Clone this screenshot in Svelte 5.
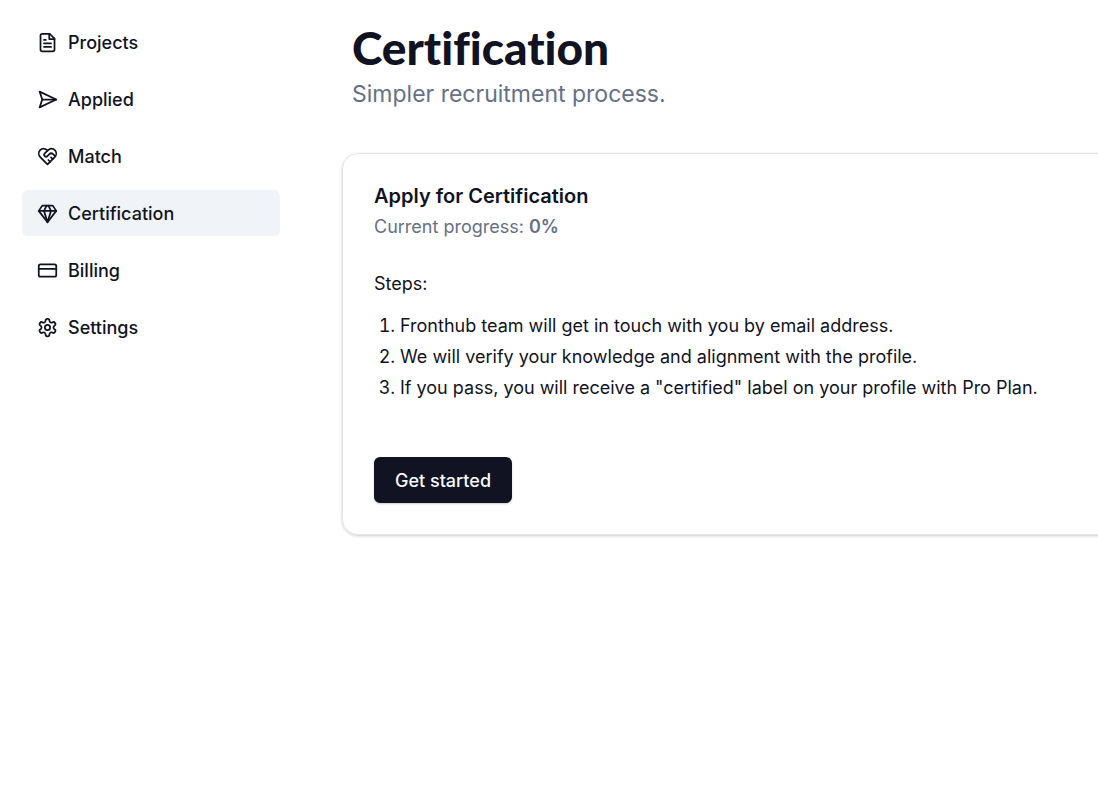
<script>
  const items = [
    { id: 'projects', label: 'Projects' },
    { id: 'applied', label: 'Applied' },
    { id: 'match', label: 'Match' },
    { id: 'certification', label: 'Certification' },
    { id: 'billing', label: 'Billing' },
    { id: 'settings', label: 'Settings' },
  ];

  let active = 'certification';
  let progress = 0;

  function start() {
    progress = progress === 0 ? 10 : progress;
  }
</script>

<div class="layout">
  <nav class="sidebar">
    {#each items as item}
      <a
        href="#{item.id}"
        class="nav-link"
        class:active={active === item.id}
        on:click|preventDefault={() => (active = item.id)}
      >
        <svg class="icon" viewBox="0 0 24 24" aria-hidden="true">
          {#if item.id === 'projects'}
            <path d="M14.5 2H6a2 2 0 0 0-2 2v16a2 2 0 0 0 2 2h12a2 2 0 0 0 2-2V7.5L14.5 2z" />
            <path d="M14 2v6h6M16 13H8M16 17H8M10 9H8" />
          {:else if item.id === 'applied'}
            <path d="m3 3 3 9-3 9 19-9Z" />
            <path d="M6 12h16" />
          {:else if item.id === 'match'}
            <path d="M20.42 4.58a5.4 5.4 0 0 0-7.65 0l-.77.78-.77-.78a5.4 5.4 0 0 0-7.65 0C1.46 6.7 1.33 10.28 4 13l8 8 8-8c2.67-2.72 2.54-6.3.42-8.42z" />
            <path d="M12 5.36 8.87 8.5a2.13 2.13 0 0 0 0 3h0a2.13 2.13 0 0 0 3 0l2.26-2.21a3 3 0 0 1 4.22 0l2.4 2.4" />
            <path d="m18 15-2-2M15 18l-2-2" />
          {:else if item.id === 'certification'}
            <path d="M6 3h12l4 6-10 13L2 9Z" />
            <path d="M11 3 8 9l4 13 4-13-3-6M2 9h20" />
          {:else if item.id === 'billing'}
            <rect width="20" height="14" x="2" y="5" rx="2" />
            <path d="M2 10h20" />
          {:else}
            <path d="M12.22 2h-.44a2 2 0 0 0-2 2v.18a2 2 0 0 1-1 1.73l-.43.25a2 2 0 0 1-2 0l-.15-.08a2 2 0 0 0-2.73.73l-.22.38a2 2 0 0 0 .73 2.73l.15.1a2 2 0 0 1 1 1.72v.51a2 2 0 0 1-1 1.74l-.15.09a2 2 0 0 0-.73 2.73l.22.38a2 2 0 0 0 2.73.73l.15-.08a2 2 0 0 1 2 0l.43.25a2 2 0 0 1 1 1.73V20a2 2 0 0 0 2 2h.44a2 2 0 0 0 2-2v-.18a2 2 0 0 1 1-1.73l.43-.25a2 2 0 0 1 2 0l.15.08a2 2 0 0 0 2.73-.73l.22-.39a2 2 0 0 0-.73-2.73l-.15-.08a2 2 0 0 1-1-1.74v-.5a2 2 0 0 1 1-1.74l.15-.09a2 2 0 0 0 .73-2.73l-.22-.38a2 2 0 0 0-2.73-.73l-.15.08a2 2 0 0 1-2 0l-.43-.25a2 2 0 0 1-1-1.73V4a2 2 0 0 0-2-2z" />
            <circle cx="12" cy="12" r="3" />
          {/if}
        </svg>
        {item.label}
      </a>
    {/each}
  </nav>

  <main class="content">
    <header class="page-header">
      <h1>Certification</h1>
      <p>Simpler recruitment process.</p>
    </header>

    <section class="card">
      <h2>Apply for Certification</h2>
      <p class="progress">Current progress: <strong>{progress}%</strong></p>

      <p class="steps-title">Steps:</p>
      <ol>
        <li>Fronthub team will get in touch with you by email address.</li>
        <li>We will verify your knowledge and alignment with the profile.</li>
        <li>If you pass, you will receive a "certified" label on your profile with Pro Plan.</li>
      </ol>

      <button type="button" on:click={start}>Get started</button>
    </section>
  </main>
</div>

<style>
  :global(body) {
    background: #fff;
    color: #111322;
    font-family: Inter, sans-serif;
    font-size: 18px;
  }

  h1,
  h2,
  p,
  ol {
    margin: 0;
  }

  .layout {
    display: flex;
    gap: 62px;
    padding-left: 22px;
    overflow: hidden;
  }

  .sidebar {
    display: flex;
    flex: 0 0 258px;
    flex-direction: column;
    gap: 11px;
    padding-top: 19px;
  }

  .nav-link {
    display: flex;
    align-items: center;
    gap: 10px;
    height: 46px;
    padding: 0 15px;
    border-radius: 6px;
    color: #111322;
    font-weight: 500;
    text-decoration: none;
  }

  .nav-link:hover,
  .nav-link.active {
    background: #f0f3f8;
  }

  .icon {
    width: 21px;
    height: 21px;
    fill: none;
    stroke: currentColor;
    stroke-width: 2;
    stroke-linecap: round;
    stroke-linejoin: round;
  }

  .content {
    flex: 1;
    min-width: 0;
    padding: 20px 0;
  }

  .page-header {
    padding-left: 10px;
  }

  .page-header h1 {
    font-family: Lato, sans-serif;
    font-size: 46px;
    font-weight: 900;
    font-variant-ligatures: none;
    line-height: 56px;
  }

  .page-header p {
    color: #667085;
    font-size: 23px;
    line-height: 36px;
  }

  .card {
    margin: 41px -20px 0 0;
    padding: 28px 31px 31px;
    border: 1px solid #e4e5ea;
    border-radius: 16px;
    box-shadow: 0 1px 3px rgba(0, 0, 0, 0.2);
  }

  .card h2 {
    font-size: 20px;
    font-weight: 600;
    line-height: 28px;
  }

  .progress {
    color: #667085;
    line-height: 34px;
  }

  .progress strong {
    font-weight: 600;
  }

  .steps-title {
    margin-top: 26px;
    line-height: 28px;
  }

  ol {
    margin-top: 12px;
    padding-left: 26px;
    line-height: 31px;
  }

  button {
    height: 46px;
    margin-top: 54px;
    padding: 0 21px;
    border: 0;
    border-radius: 6px;
    background: #111322;
    box-shadow: 0 1px 2px rgba(0, 0, 0, 0.2);
    color: #f8fafc;
    font: 500 18px Inter, sans-serif;
    cursor: pointer;
  }
</style>
